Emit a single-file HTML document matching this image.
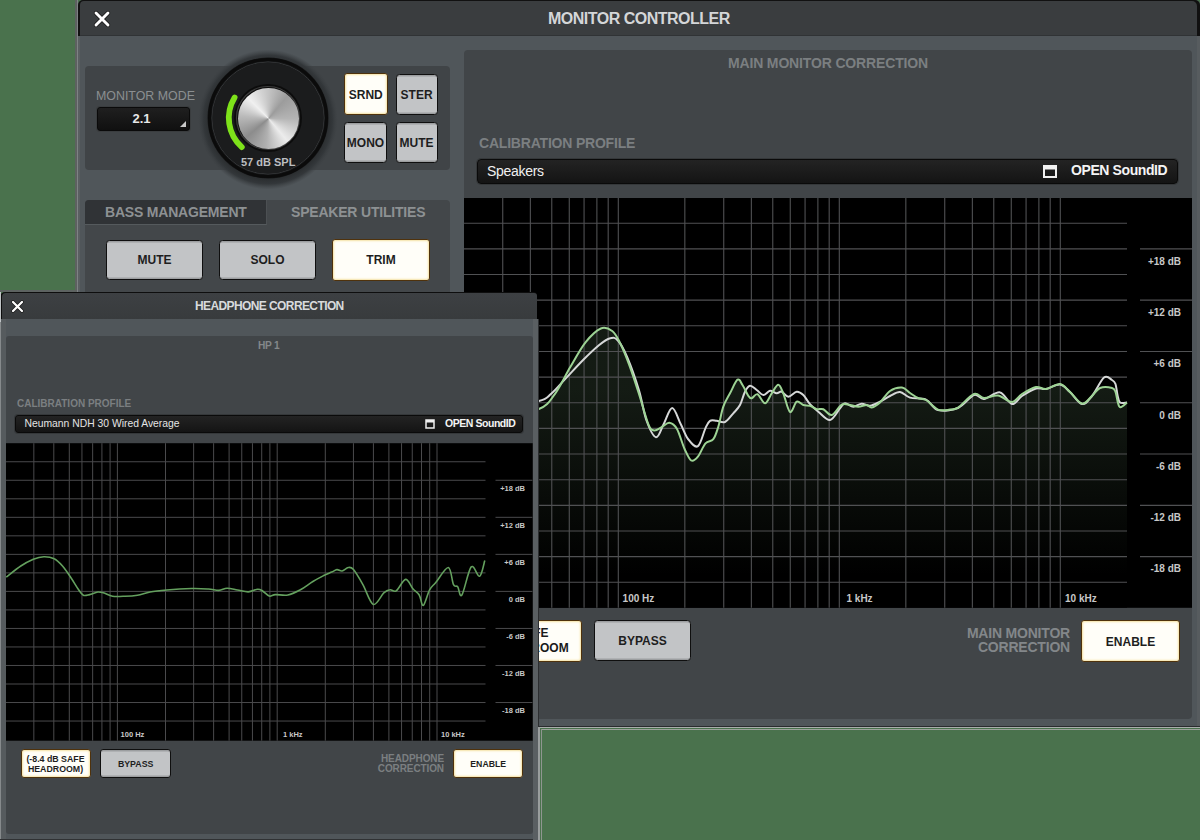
<!DOCTYPE html>
<html><head><meta charset="utf-8"><style>
*{box-sizing:border-box;margin:0;padding:0}
html,body{width:1200px;height:840px;overflow:hidden;background:#4a724d;font-family:"Liberation Sans", sans-serif}
.a{position:absolute}
.t{position:absolute;white-space:nowrap;font-family:"Liberation Sans", sans-serif}
.btn{position:absolute;border:1.8px solid #0f0f0f;border-radius:3.5px;padding-top:1px;background:#c2c4c6;color:#1e1e1e;font-weight:bold;display:flex;align-items:center;justify-content:center;text-align:center;box-shadow:inset 0 1.5px 0 #9c9ea0, inset 0 -1.5px 0 #9c9ea0}
.on{background:#fffef8;border-color:#4f320c;border-width:1.7px;border-radius:3px;box-shadow:inset 0 0 2px 1px #f5e2a4}
</style></head><body>

<div class="a" style="left:75px;top:0;width:3px;height:728px;background:#5d6160"></div>
<div class="a" style="left:77px;top:0;width:1px;height:728px;background:#7e8284"></div>
<div class="a" style="left:78px;top:0;width:1122px;height:728px;background:#50565a;border-top-left-radius:5px;border-top-right-radius:5px;overflow:hidden">
<div class="a" style="left:0;top:0;width:1122px;height:36px;background:#111"></div>
<div class="a" style="left:2px;top:1px;width:1117px;height:35px;background:#3a3d3f;border-top-left-radius:4px;border-top-right-radius:5px"></div>
<div class="a" style="left:0;top:36px;width:2px;height:692px;background:#5a5f62"></div>
<div class="a" style="left:2px;top:35px;width:1117px;height:1px;background:#303335"></div>
<div class="a" style="left:1119px;top:36px;width:3px;height:692px;background:#575c5f"></div>
<div class="a" style="left:0;top:726px;width:1122px;height:2px;background:#2a2c2e"></div>
</div>
<div class="a" style="left:538px;top:727px;width:662px;height:1.2px;background:#a9adab"></div>
<div class="a" style="left:541px;top:729px;width:659px;height:1.2px;background:#9ca29c"></div>
<div class="a" style="left:538.4px;top:727px;width:1.2px;height:113px;background:#9a9e9e"></div>
<div class="a" style="left:541px;top:729px;width:1.2px;height:111px;background:#8f9690"></div>
<svg class="a" style="left:91.8px;top:8.5px" width="20" height="20" viewBox="0 0 20 20"><path d="M4,4 L16,16 M16,4 L4,16" stroke="#151515" stroke-width="4.4" stroke-linecap="round"/><path d="M4,4 L16,16 M16,4 L4,16" stroke="#fff" stroke-width="2.9" stroke-linecap="round"/></svg>
<div class="t" style="left:548px;top:10.2px;font-size:16px;font-weight:bold;color:#d4d6d8;letter-spacing:-0.5px">MONITOR CONTROLLER</div>
<div class="a" style="left:85px;top:66px;width:365px;height:104px;background:#404447;border-radius:4px"></div>
<div class="t" style="left:96px;top:89px;font-size:12.4px;color:#8b8f91">MONITOR MODE</div>
<div class="a" style="left:97px;top:107px;width:93px;height:24px;background:linear-gradient(#1f1f1f,#101010);border:1px solid #0a0a0a;border-radius:3px;box-shadow:0 0 0 1px #3a3d3f"></div>
<div class="t" style="left:97px;top:111.3px;width:89px;text-align:center;font-size:13px;font-weight:bold;color:#e8e8e8">2.1</div>
<svg class="a" style="left:180px;top:121px" width="7" height="7"><path d="M6,0 L6,6 L0,6 Z" fill="#c8c8c8"/></svg>
<svg class="a" style="left:196px;top:46px" width="144" height="144" viewBox="0 0 144 144">
<defs>
<radialGradient id="halo" cx="72" cy="73.5" r="70" gradientUnits="userSpaceOnUse"><stop offset="0.84" stop-color="#2a2d2f"/><stop offset="0.92" stop-color="#33373a"/><stop offset="1" stop-color="#3c4043" stop-opacity="0"/></radialGradient>
</defs>
<circle cx="72" cy="73.5" r="70" fill="url(#halo)"/>
<circle cx="72" cy="72" r="60.5" fill="#161718"/>
<circle cx="72" cy="72" r="58.5" fill="none" stroke="#0b0b0b" stroke-width="3"/>
<circle cx="72" cy="72" r="56" fill="none" stroke="#36383a" stroke-width="1"/>
<circle cx="72" cy="72" r="55.5" fill="#1b1c1d"/>
<circle cx="72" cy="72" r="34" fill="#0c0c0c"/>
<circle cx="72" cy="72" r="31.5" fill="none" stroke="#3c3c3c" stroke-width="1.2"/>
<path d="M38.6,51.5 A39.2,39.2 0 0 0 45.8,101.1" fill="none" stroke="#7ee21a" stroke-width="5.8" stroke-linecap="round"/>
</svg>
<div class="a" style="left:237.5px;top:87.5px;width:61px;height:61px;border-radius:50%;background:conic-gradient(from 0deg,#c4c4c4 0deg,#9c9c9c 40deg,#b4b4b4 90deg,#ececec 140deg,#b0b0b0 185deg,#8c8c8c 230deg,#bababa 275deg,#f0f0f0 315deg,#c4c4c4 360deg)"></div>
<div class="t" style="left:241px;top:156px;font-size:11px;font-weight:bold;color:#bcbec0">57 dB SPL</div>
<div class="btn on" style="left:344px;top:73px;width:43.5px;height:42px;font-size:12px;">SRND</div>
<div class="btn" style="left:395.5px;top:73.5px;width:42.19999999999999px;height:41.0px;font-size:12px;">STER</div>
<div class="btn" style="left:344px;top:122px;width:43px;height:41px;font-size:12px;">MONO</div>
<div class="btn" style="left:395.5px;top:122px;width:42.19999999999999px;height:41px;font-size:12px;">MUTE</div>
<div class="a" style="left:85px;top:199.5px;width:365px;height:120px;background:#43474a;border-radius:4px 4px 0 0"></div>
<div class="a" style="left:85px;top:200px;width:182px;height:25px;background:#303336;border-radius:4px 0 0 0;border-bottom:1px solid #555a5d;border-right:1px solid #4c5053"></div>
<div class="t" style="left:105px;top:204px;font-size:14px;font-weight:bold;color:#8d9193;letter-spacing:-0.2px">BASS MANAGEMENT</div>
<div class="t" style="left:291px;top:204px;font-size:14px;font-weight:bold;color:#8d9193;letter-spacing:-0.2px">SPEAKER UTILITIES</div>
<div class="btn" style="left:106px;top:239.5px;width:97px;height:40.5px;font-size:12px;">MUTE</div>
<div class="btn" style="left:219px;top:239.5px;width:97px;height:40.5px;font-size:12px;">SOLO</div>
<div class="btn on" style="left:332px;top:239px;width:98px;height:41.5px;font-size:12px;">TRIM</div>
<div class="a" style="left:464px;top:50px;width:728px;height:669px;background:#414548;border-radius:4px"></div>
<div class="t" style="left:464px;top:55px;width:728px;text-align:center;font-size:14px;font-weight:bold;color:#7b7f81;letter-spacing:-0.15px">MAIN MONITOR CORRECTION</div>
<div class="t" style="left:479px;top:135px;font-size:14px;font-weight:bold;color:#7b7f81;letter-spacing:-0.2px">CALIBRATION PROFILE</div>
<div class="a" style="left:477px;top:159px;width:701px;height:25px;background:linear-gradient(#232323,#141414);border:1px solid #0a0a0a;border-radius:4px;box-shadow:0 0 0 1px #35383a"></div>
<div class="t" style="left:487px;top:163px;font-size:14px;color:#f0f0f0;letter-spacing:-0.3px">Speakers</div>
<svg class="a" style="left:1043px;top:165px" width="14" height="13"><rect x="1" y="1" width="12" height="11" fill="none" stroke="#f0f0f0" stroke-width="2"/><rect x="1" y="1" width="12" height="3.5" fill="#f0f0f0"/></svg>
<div class="t" style="left:1071px;top:162px;font-size:14px;font-weight:bold;color:#f4f4f4;letter-spacing:-0.4px">OPEN SoundID</div>
<svg class="a" style="left:0;top:0" width="1200" height="840" viewBox="0 0 1200 840">
<defs><linearGradient id="mfill" x1="0" y1="390" x2="0" y2="575" gradientUnits="userSpaceOnUse"><stop offset="0" stop-color="#161e16"/><stop offset="1" stop-color="#000"/></linearGradient></defs>
<rect x="464" y="198" width="728" height="409.79999999999995" fill="#000"/>
<path d="M464.0,420.0 C470.0,419.2 487.5,416.8 500.0,415.0 C512.5,413.2 529.7,412.5 538.9,409.0 C548.1,405.5 549.8,400.8 555.0,393.8 C560.2,386.8 565.2,375.7 570.3,367.1 C575.4,358.5 580.4,348.8 585.5,342.4 C590.6,336.0 596.3,330.4 600.8,328.5 C605.2,326.6 609.0,328.7 612.2,331.0 C615.4,333.3 616.9,336.7 619.8,342.4 C622.6,348.1 626.1,356.6 629.3,365.2 C632.5,373.8 635.7,383.9 638.9,393.8 C642.1,403.7 645.9,418.2 648.4,424.3 C650.9,430.4 651.9,429.9 654.1,430.4 C656.3,430.9 659.2,428.4 661.7,427.1 C664.2,425.8 666.8,422.5 669.3,422.8 C671.8,423.1 674.5,424.6 677.0,429.0 C679.5,433.4 682.2,443.8 684.6,449.0 C687.0,454.2 689.0,459.2 691.2,460.5 C693.4,461.8 695.5,459.6 697.9,456.7 C700.3,453.8 702.9,446.2 705.5,443.3 C708.1,440.4 711.2,442.0 713.3,439.2 C715.4,436.4 716.6,432.1 718.3,426.7 C720.0,421.3 721.3,412.3 723.3,406.7 C725.2,401.1 727.6,397.8 730.0,393.3 C732.4,388.8 735.4,381.1 737.5,379.7 C739.6,378.3 740.7,382.3 742.5,385.0 C744.3,387.7 746.8,393.6 748.3,395.8 C749.8,398.0 750.2,398.6 751.7,398.3 C753.2,398.0 755.3,393.4 757.5,394.2 C759.7,395.0 762.6,403.4 765.0,403.3 C767.4,403.2 769.5,396.4 771.7,393.3 C773.9,390.2 776.4,384.7 778.3,384.7 C780.2,384.7 781.3,388.8 783.3,393.3 C785.2,397.9 787.8,410.6 790.0,412.0 C792.2,413.4 794.5,402.9 796.7,401.7 C798.9,400.5 801.1,404.3 803.3,405.0 C805.5,405.7 807.8,405.1 810.0,405.8 C812.2,406.5 814.5,408.6 816.7,409.2 C818.9,409.8 820.8,408.2 823.3,409.2 C825.8,410.2 828.6,415.8 831.7,415.0 C834.8,414.2 838.7,406.4 841.7,404.7 C844.8,403.0 847.2,404.7 850.0,405.0 C852.8,405.3 855.5,406.7 858.3,406.7 C861.1,406.7 864.5,404.9 866.7,405.0 C868.9,405.1 869.5,407.9 871.7,407.5 C873.9,407.1 877.0,405.2 880.0,402.5 C883.0,399.8 886.3,393.5 890.0,391.0 C893.7,388.5 898.7,387.3 902.0,387.6 C905.3,387.9 907.3,391.3 910.0,393.0 C912.7,394.7 915.3,396.8 918.0,398.0 C920.7,399.2 922.7,398.1 926.0,400.0 C929.3,401.9 934.0,408.0 938.0,409.6 C942.0,411.2 946.7,409.9 950.0,409.6 C953.3,409.3 954.0,410.2 958.0,407.6 C962.0,405.0 969.7,395.6 974.0,394.0 C978.3,392.4 980.0,397.7 984.0,398.0 C988.0,398.3 993.3,394.9 998.0,395.6 C1002.7,396.3 1008.0,402.3 1012.0,402.0 C1016.0,401.7 1018.0,396.5 1022.0,394.0 C1026.0,391.5 1032.0,387.8 1036.0,387.0 C1040.0,386.2 1042.0,389.5 1046.0,389.0 C1050.0,388.5 1056.0,383.5 1060.0,384.0 C1064.0,384.5 1066.3,388.7 1070.0,392.0 C1073.7,395.3 1078.3,402.9 1082.0,403.6 C1085.7,404.3 1089.0,398.6 1092.0,396.0 C1095.0,393.4 1096.7,389.3 1100.0,388.0 C1103.3,386.7 1109.4,387.3 1112.0,388.0 C1114.6,388.7 1114.5,389.5 1115.5,392.0 C1116.5,394.5 1117.2,400.4 1118.0,403.0 C1118.8,405.6 1119.0,407.4 1120.5,407.3 C1122.0,407.2 1125.9,403.3 1127.0,402.5 L1127,607.8 L464,607.8 Z" fill="url(#mfill)" opacity="0.9"/>
<g stroke="#505153" stroke-width="1.1">
<line x1="502.74" y1="198" x2="502.74" y2="607.8" />
<line x1="530.36" y1="198" x2="530.36" y2="607.8" />
<line x1="551.77" y1="198" x2="551.77" y2="607.8" />
<line x1="569.27" y1="198" x2="569.27" y2="607.8" />
<line x1="584.07" y1="198" x2="584.07" y2="607.8" />
<line x1="596.88" y1="198" x2="596.88" y2="607.8" />
<line x1="608.19" y1="198" x2="608.19" y2="607.8" />
<line x1="618.30" y1="198" x2="618.30" y2="607.8" />
<line x1="684.83" y1="198" x2="684.83" y2="607.8" />
<line x1="723.74" y1="198" x2="723.74" y2="607.8" />
<line x1="751.36" y1="198" x2="751.36" y2="607.8" />
<line x1="772.77" y1="198" x2="772.77" y2="607.8" />
<line x1="790.27" y1="198" x2="790.27" y2="607.8" />
<line x1="805.07" y1="198" x2="805.07" y2="607.8" />
<line x1="817.88" y1="198" x2="817.88" y2="607.8" />
<line x1="829.19" y1="198" x2="829.19" y2="607.8" />
<line x1="839.30" y1="198" x2="839.30" y2="607.8" />
<line x1="905.83" y1="198" x2="905.83" y2="607.8" />
<line x1="944.74" y1="198" x2="944.74" y2="607.8" />
<line x1="972.36" y1="198" x2="972.36" y2="607.8" />
<line x1="993.77" y1="198" x2="993.77" y2="607.8" />
<line x1="1011.27" y1="198" x2="1011.27" y2="607.8" />
<line x1="1026.07" y1="198" x2="1026.07" y2="607.8" />
<line x1="1038.88" y1="198" x2="1038.88" y2="607.8" />
<line x1="1050.19" y1="198" x2="1050.19" y2="607.8" />
<line x1="1060.30" y1="198" x2="1060.30" y2="607.8" />
<line x1="464" y1="223.20" x2="1127" y2="223.20" />
<line x1="464" y1="248.85" x2="1127" y2="248.85" />
<line x1="464" y1="274.50" x2="1127" y2="274.50" />
<line x1="464" y1="300.15" x2="1127" y2="300.15" />
<line x1="464" y1="325.80" x2="1127" y2="325.80" />
<line x1="464" y1="351.45" x2="1127" y2="351.45" />
<line x1="464" y1="377.10" x2="1127" y2="377.10" />
<line x1="464" y1="402.75" x2="1127" y2="402.75" />
<line x1="464" y1="428.40" x2="1127" y2="428.40" />
<line x1="464" y1="454.05" x2="1127" y2="454.05" />
<line x1="464" y1="479.70" x2="1127" y2="479.70" />
<line x1="464" y1="505.35" x2="1127" y2="505.35" />
<line x1="464" y1="531.00" x2="1127" y2="531.00" />
<line x1="464" y1="556.65" x2="1127" y2="556.65" />
<line x1="464" y1="582.30" x2="1127" y2="582.30" />
<line x1="1140" y1="248.85" x2="1192" y2="248.85" />
<line x1="1140" y1="300.15" x2="1192" y2="300.15" />
<line x1="1140" y1="351.45" x2="1192" y2="351.45" />
<line x1="1140" y1="402.75" x2="1192" y2="402.75" />
<line x1="1140" y1="454.05" x2="1192" y2="454.05" />
<line x1="1140" y1="505.35" x2="1192" y2="505.35" />
<line x1="1140" y1="556.65" x2="1192" y2="556.65" />
</g>
<path d="M464.0,410.0 C470.0,409.3 487.5,407.5 500.0,406.0 C512.5,404.5 530.4,403.0 538.9,401.0 C547.4,399.0 546.6,397.7 551.2,393.8 C555.8,389.9 561.1,383.3 566.5,377.6 C571.9,371.9 578.2,364.9 583.6,359.5 C589.0,354.1 594.5,348.8 598.9,345.2 C603.3,341.6 607.1,339.0 610.3,338.2 C613.5,337.4 615.0,337.3 617.9,340.5 C620.8,343.7 623.9,349.4 627.4,357.6 C630.9,365.9 635.7,379.5 638.9,390.0 C642.1,400.5 643.6,412.6 646.5,420.5 C649.4,428.4 653.1,436.6 656.0,437.2 C658.9,437.8 660.9,429.1 663.6,424.3 C666.3,419.5 669.3,408.1 672.2,408.1 C675.1,408.1 678.1,419.1 680.8,424.3 C683.5,429.5 685.5,435.9 688.4,439.5 C691.2,443.1 695.0,448.1 697.9,446.2 C700.8,444.3 703.5,432.3 705.5,428.1 C707.5,423.9 708.1,422.0 710.0,420.8 C711.9,419.6 714.2,420.6 716.7,420.8 C719.2,421.0 722.2,423.2 725.0,422.0 C727.8,420.8 730.8,416.1 733.3,413.3 C735.8,410.5 738.0,408.6 740.0,405.0 C742.0,401.4 743.3,394.9 745.0,391.7 C746.7,388.5 748.0,386.1 750.0,385.8 C752.0,385.5 754.5,388.5 756.7,390.0 C758.9,391.5 761.1,394.9 763.3,395.0 C765.5,395.1 767.8,391.1 770.0,390.8 C772.2,390.5 774.8,393.2 776.7,393.3 C778.7,393.4 779.8,391.1 781.7,391.7 C783.6,392.3 785.8,396.7 788.3,396.7 C790.8,396.7 794.2,392.0 796.7,391.7 C799.2,391.4 801.1,392.9 803.3,395.0 C805.5,397.1 807.5,401.4 810.0,404.2 C812.5,407.0 815.0,409.1 818.3,411.7 C821.6,414.3 826.4,420.6 830.0,420.0 C833.6,419.4 837.5,411.1 840.0,408.3 C842.5,405.5 842.8,403.6 845.0,403.3 C847.2,403.0 850.5,406.6 853.3,406.7 C856.1,406.8 858.9,403.8 861.7,403.7 C864.5,403.6 867.0,406.1 870.0,405.8 C873.0,405.5 876.7,403.3 880.0,401.7 C883.3,400.1 886.7,397.6 890.0,396.0 C893.3,394.4 896.7,391.7 900.0,392.0 C903.3,392.3 905.7,396.3 910.0,397.6 C914.3,398.9 921.3,397.5 926.0,399.6 C930.7,401.7 932.7,408.6 938.0,410.0 C943.3,411.4 952.0,410.5 958.0,408.0 C964.0,405.5 969.7,396.5 974.0,395.0 C978.3,393.5 979.7,399.4 984.0,399.0 C988.3,398.6 995.3,391.6 1000.0,392.4 C1004.7,393.2 1008.3,403.4 1012.0,404.0 C1015.7,404.6 1018.0,398.6 1022.0,396.0 C1026.0,393.4 1032.0,389.7 1036.0,388.5 C1040.0,387.3 1042.0,389.7 1046.0,389.0 C1050.0,388.3 1056.0,384.0 1060.0,384.5 C1064.0,385.0 1066.3,388.8 1070.0,392.0 C1073.7,395.2 1078.3,403.3 1082.0,404.0 C1085.7,404.7 1088.3,400.4 1092.0,396.0 C1095.7,391.6 1100.7,380.3 1104.0,377.6 C1107.3,374.9 1110.1,378.9 1112.0,380.0 C1113.9,381.1 1114.6,381.5 1115.5,384.0 C1116.4,386.5 1116.8,391.9 1117.5,395.0 C1118.2,398.1 1118.4,401.2 1120.0,402.5 C1121.6,403.8 1125.8,402.5 1127.0,402.5" fill="none" stroke="#d6d8d8" stroke-width="2"/>
<path d="M464.0,420.0 C470.0,419.2 487.5,416.8 500.0,415.0 C512.5,413.2 529.7,412.5 538.9,409.0 C548.1,405.5 549.8,400.8 555.0,393.8 C560.2,386.8 565.2,375.7 570.3,367.1 C575.4,358.5 580.4,348.8 585.5,342.4 C590.6,336.0 596.3,330.4 600.8,328.5 C605.2,326.6 609.0,328.7 612.2,331.0 C615.4,333.3 616.9,336.7 619.8,342.4 C622.6,348.1 626.1,356.6 629.3,365.2 C632.5,373.8 635.7,383.9 638.9,393.8 C642.1,403.7 645.9,418.2 648.4,424.3 C650.9,430.4 651.9,429.9 654.1,430.4 C656.3,430.9 659.2,428.4 661.7,427.1 C664.2,425.8 666.8,422.5 669.3,422.8 C671.8,423.1 674.5,424.6 677.0,429.0 C679.5,433.4 682.2,443.8 684.6,449.0 C687.0,454.2 689.0,459.2 691.2,460.5 C693.4,461.8 695.5,459.6 697.9,456.7 C700.3,453.8 702.9,446.2 705.5,443.3 C708.1,440.4 711.2,442.0 713.3,439.2 C715.4,436.4 716.6,432.1 718.3,426.7 C720.0,421.3 721.3,412.3 723.3,406.7 C725.2,401.1 727.6,397.8 730.0,393.3 C732.4,388.8 735.4,381.1 737.5,379.7 C739.6,378.3 740.7,382.3 742.5,385.0 C744.3,387.7 746.8,393.6 748.3,395.8 C749.8,398.0 750.2,398.6 751.7,398.3 C753.2,398.0 755.3,393.4 757.5,394.2 C759.7,395.0 762.6,403.4 765.0,403.3 C767.4,403.2 769.5,396.4 771.7,393.3 C773.9,390.2 776.4,384.7 778.3,384.7 C780.2,384.7 781.3,388.8 783.3,393.3 C785.2,397.9 787.8,410.6 790.0,412.0 C792.2,413.4 794.5,402.9 796.7,401.7 C798.9,400.5 801.1,404.3 803.3,405.0 C805.5,405.7 807.8,405.1 810.0,405.8 C812.2,406.5 814.5,408.6 816.7,409.2 C818.9,409.8 820.8,408.2 823.3,409.2 C825.8,410.2 828.6,415.8 831.7,415.0 C834.8,414.2 838.7,406.4 841.7,404.7 C844.8,403.0 847.2,404.7 850.0,405.0 C852.8,405.3 855.5,406.7 858.3,406.7 C861.1,406.7 864.5,404.9 866.7,405.0 C868.9,405.1 869.5,407.9 871.7,407.5 C873.9,407.1 877.0,405.2 880.0,402.5 C883.0,399.8 886.3,393.5 890.0,391.0 C893.7,388.5 898.7,387.3 902.0,387.6 C905.3,387.9 907.3,391.3 910.0,393.0 C912.7,394.7 915.3,396.8 918.0,398.0 C920.7,399.2 922.7,398.1 926.0,400.0 C929.3,401.9 934.0,408.0 938.0,409.6 C942.0,411.2 946.7,409.9 950.0,409.6 C953.3,409.3 954.0,410.2 958.0,407.6 C962.0,405.0 969.7,395.6 974.0,394.0 C978.3,392.4 980.0,397.7 984.0,398.0 C988.0,398.3 993.3,394.9 998.0,395.6 C1002.7,396.3 1008.0,402.3 1012.0,402.0 C1016.0,401.7 1018.0,396.5 1022.0,394.0 C1026.0,391.5 1032.0,387.8 1036.0,387.0 C1040.0,386.2 1042.0,389.5 1046.0,389.0 C1050.0,388.5 1056.0,383.5 1060.0,384.0 C1064.0,384.5 1066.3,388.7 1070.0,392.0 C1073.7,395.3 1078.3,402.9 1082.0,403.6 C1085.7,404.3 1089.0,398.6 1092.0,396.0 C1095.0,393.4 1096.7,389.3 1100.0,388.0 C1103.3,386.7 1109.4,387.3 1112.0,388.0 C1114.6,388.7 1114.5,389.5 1115.5,392.0 C1116.5,394.5 1117.2,400.4 1118.0,403.0 C1118.8,405.6 1119.0,407.4 1120.5,407.3 C1122.0,407.2 1125.9,403.3 1127.0,402.5" fill="none" stroke="#9dd394" stroke-width="2"/>
</svg>
<div class="t" style="left:1100px;width:81px;text-align:right;top:255.7px;font-size:10px;font-weight:bold;color:#c8c8c8">+18 dB</div>
<div class="t" style="left:1100px;width:81px;text-align:right;top:306.9px;font-size:10px;font-weight:bold;color:#c8c8c8">+12 dB</div>
<div class="t" style="left:1100px;width:81px;text-align:right;top:358.2px;font-size:10px;font-weight:bold;color:#c8c8c8">+6 dB</div>
<div class="t" style="left:1100px;width:81px;text-align:right;top:409.6px;font-size:10px;font-weight:bold;color:#c8c8c8">0 dB</div>
<div class="t" style="left:1100px;width:81px;text-align:right;top:460.9px;font-size:10px;font-weight:bold;color:#c8c8c8">-6 dB</div>
<div class="t" style="left:1100px;width:81px;text-align:right;top:512.1px;font-size:10px;font-weight:bold;color:#c8c8c8">-12 dB</div>
<div class="t" style="left:1100px;width:81px;text-align:right;top:563.4px;font-size:10px;font-weight:bold;color:#c8c8c8">-18 dB</div>
<div class="t" style="left:622.6px;top:592.5px;font-size:10px;font-weight:bold;color:#c8c8c8">100 Hz</div>
<div class="t" style="left:846.5px;top:592.5px;font-size:10px;font-weight:bold;color:#c8c8c8">1 kHz</div>
<div class="t" style="left:1065px;top:592.5px;font-size:10px;font-weight:bold;color:#c8c8c8">10 kHz</div>
<div class="btn on" style="left:480px;top:620px;width:101.5px;height:41.5px;font-size:12px;"></div>
<div class="t" style="left:448px;width:100.5px;text-align:right;top:626px;font-size:12px;font-weight:bold;color:#1a1a1a">(-8.4 dB SAFE</div>
<div class="t" style="left:468px;width:100.7px;text-align:right;top:640.5px;font-size:12px;font-weight:bold;color:#1a1a1a">HEADROOM</div>
<div class="btn" style="left:594px;top:620px;width:97px;height:41px;font-size:12px;">BYPASS</div>
<div class="t" style="left:900px;width:170px;text-align:right;top:626px;font-size:14px;font-weight:bold;color:#83878a;line-height:14px;letter-spacing:-0.2px">MAIN MONITOR<br>CORRECTION</div>
<div class="btn on" style="left:1081px;top:620px;width:99px;height:42px;font-size:12px;">ENABLE</div>
<div class="a" style="left:0;top:290px;width:75px;height:2px;background:#5d6361"></div>
<div class="a" style="left:0;top:291.5px;width:537px;height:28px;background:#0e0e0e;border-top-left-radius:5px;border-top-right-radius:4px"></div>
<div class="a" style="left:1.5px;top:292.5px;width:535px;height:26.5px;background:linear-gradient(#3d4043,#383b3d);border-top-left-radius:4px;border-top-right-radius:3px"></div>
<div class="a" style="left:0;top:319px;width:538px;height:521px;background:#50565a"></div>
<div class="a" style="left:0;top:319px;width:1px;height:521px;background:#868a8c"></div>
<div class="a" style="left:1px;top:319px;width:5px;height:521px;background:#565b5e"></div>
<div class="a" style="left:0;top:839px;width:538px;height:1px;background:#303234"></div>
<div class="a" style="left:533px;top:319px;width:5px;height:521px;background:#5a5f62"></div>
<div class="a" style="left:537.5px;top:319px;width:1px;height:408px;background:#2c2e30"></div>
<div class="a" style="left:0;top:292px;width:1px;height:30px;background:#c0c4c6"></div>
<svg class="a" style="left:10px;top:299px" width="15" height="15" viewBox="0 0 15 15"><path d="M3,3 L12,12 M12,3 L3,12" stroke="#151515" stroke-width="3.6" stroke-linecap="round"/><path d="M3,3 L12,12 M12,3 L3,12" stroke="#fff" stroke-width="2.3" stroke-linecap="round"/></svg>
<div class="t" style="left:195px;top:299px;font-size:12px;font-weight:bold;color:#d8dadc;letter-spacing:-0.6px">HEADPHONE CORRECTION</div>
<div class="a" style="left:6px;top:336px;width:527px;height:498px;background:#414548;border-radius:3px"></div>
<div class="t" style="left:258px;top:340px;font-size:10.2px;font-weight:bold;color:#84888a;letter-spacing:-0.3px">HP 1</div>
<div class="t" style="left:17px;top:398px;font-size:10px;font-weight:bold;color:#7b7f81">CALIBRATION PROFILE</div>
<div class="a" style="left:15px;top:415px;width:508px;height:18px;background:linear-gradient(#232323,#141414);border:1px solid #0a0a0a;border-radius:3px;box-shadow:0 0 0 1px #35383a"></div>
<div class="t" style="left:24.5px;top:418px;font-size:10.35px;color:#e4e4e4">Neumann NDH 30 Wired Average</div>
<svg class="a" style="left:425px;top:419px" width="10" height="10"><rect x="1" y="1" width="8" height="8" fill="none" stroke="#f0f0f0" stroke-width="1.5"/><rect x="1" y="1" width="8" height="2.5" fill="#f0f0f0"/></svg>
<div class="t" style="left:445px;top:417px;font-size:10.5px;font-weight:bold;color:#f4f4f4;letter-spacing:-0.45px">OPEN SoundID</div>
<svg class="a" style="left:0;top:0" width="1200" height="840" viewBox="0 0 1200 840">
<rect x="6" y="443.2" width="526.7" height="297.50000000000006" fill="#000"/>
<g stroke="#4a4a4c" stroke-width="1">
<line x1="33.84" y1="443.2" x2="33.84" y2="740.7" />
<line x1="53.81" y1="443.2" x2="53.81" y2="740.7" />
<line x1="69.30" y1="443.2" x2="69.30" y2="740.7" />
<line x1="81.95" y1="443.2" x2="81.95" y2="740.7" />
<line x1="92.65" y1="443.2" x2="92.65" y2="740.7" />
<line x1="101.91" y1="443.2" x2="101.91" y2="740.7" />
<line x1="110.09" y1="443.2" x2="110.09" y2="740.7" />
<line x1="117.40" y1="443.2" x2="117.40" y2="740.7" />
<line x1="165.50" y1="443.2" x2="165.50" y2="740.7" />
<line x1="193.64" y1="443.2" x2="193.64" y2="740.7" />
<line x1="213.61" y1="443.2" x2="213.61" y2="740.7" />
<line x1="229.10" y1="443.2" x2="229.10" y2="740.7" />
<line x1="241.75" y1="443.2" x2="241.75" y2="740.7" />
<line x1="252.45" y1="443.2" x2="252.45" y2="740.7" />
<line x1="261.71" y1="443.2" x2="261.71" y2="740.7" />
<line x1="269.89" y1="443.2" x2="269.89" y2="740.7" />
<line x1="277.20" y1="443.2" x2="277.20" y2="740.7" />
<line x1="325.30" y1="443.2" x2="325.30" y2="740.7" />
<line x1="353.44" y1="443.2" x2="353.44" y2="740.7" />
<line x1="373.41" y1="443.2" x2="373.41" y2="740.7" />
<line x1="388.90" y1="443.2" x2="388.90" y2="740.7" />
<line x1="401.55" y1="443.2" x2="401.55" y2="740.7" />
<line x1="412.25" y1="443.2" x2="412.25" y2="740.7" />
<line x1="421.51" y1="443.2" x2="421.51" y2="740.7" />
<line x1="429.69" y1="443.2" x2="429.69" y2="740.7" />
<line x1="437.00" y1="443.2" x2="437.00" y2="740.7" />
<line x1="6" y1="461.76" x2="485.5" y2="461.76" />
<line x1="6" y1="480.28" x2="485.5" y2="480.28" />
<line x1="6" y1="498.80" x2="485.5" y2="498.80" />
<line x1="6" y1="517.32" x2="485.5" y2="517.32" />
<line x1="6" y1="535.84" x2="485.5" y2="535.84" />
<line x1="6" y1="554.36" x2="485.5" y2="554.36" />
<line x1="6" y1="572.88" x2="485.5" y2="572.88" />
<line x1="6" y1="591.40" x2="485.5" y2="591.40" />
<line x1="6" y1="609.92" x2="485.5" y2="609.92" />
<line x1="6" y1="628.44" x2="485.5" y2="628.44" />
<line x1="6" y1="646.96" x2="485.5" y2="646.96" />
<line x1="6" y1="665.48" x2="485.5" y2="665.48" />
<line x1="6" y1="684.00" x2="485.5" y2="684.00" />
<line x1="6" y1="702.52" x2="485.5" y2="702.52" />
<line x1="6" y1="721.04" x2="485.5" y2="721.04" />
<line x1="495.5" y1="480.28" x2="532.4" y2="480.28" />
<line x1="495.5" y1="517.32" x2="532.4" y2="517.32" />
<line x1="495.5" y1="554.36" x2="532.4" y2="554.36" />
<line x1="495.5" y1="591.40" x2="532.4" y2="591.40" />
<line x1="495.5" y1="628.44" x2="532.4" y2="628.44" />
<line x1="495.5" y1="665.48" x2="532.4" y2="665.48" />
<line x1="495.5" y1="702.52" x2="532.4" y2="702.52" />
</g>
<path d="M6.2,577.1 C8.7,575.2 16.3,569.0 20.8,566.0 C25.3,563.0 29.5,560.8 33.3,559.2 C37.1,557.7 40.3,556.8 43.8,556.7 C47.2,556.6 51.1,557.2 54.2,558.8 C57.3,560.3 59.7,562.9 62.5,566.0 C65.3,569.1 68.2,573.7 70.8,577.5 C73.4,581.3 76.0,586.0 78.1,589.0 C80.2,592.0 81.4,594.3 83.3,595.2 C85.2,596.1 87.2,595.1 89.6,594.6 C92.0,594.1 95.5,592.2 97.9,592.0 C100.3,591.8 101.8,592.4 104.2,593.1 C106.6,593.8 109.0,595.7 112.5,596.2 C116.0,596.8 120.8,596.4 125.0,596.2 C129.2,596.1 133.3,595.9 137.5,595.2 C141.7,594.5 145.1,592.9 150.0,592.0 C154.9,591.1 159.8,590.6 166.7,590.0 C173.6,589.4 184.8,588.7 191.7,588.5 C198.6,588.3 203.8,588.7 208.3,589.0 C212.8,589.3 215.6,590.5 218.8,590.4 C221.9,590.3 223.9,588.4 227.0,588.3 C230.1,588.2 233.9,589.4 237.5,590.0 C241.1,590.6 244.9,592.0 248.3,591.9 C251.7,591.8 255.3,589.3 257.7,589.2 C260.1,589.1 261.0,590.1 262.9,591.2 C264.8,592.4 267.1,595.4 269.2,596.0 C271.3,596.6 272.3,594.8 275.4,594.6 C278.5,594.4 283.7,595.8 287.9,595.0 C292.1,594.2 296.2,592.0 300.4,589.8 C304.6,587.5 309.1,583.8 312.9,581.5 C316.7,579.2 320.2,577.4 323.3,575.8 C326.4,574.2 329.4,573.1 331.7,572.1 C334.0,571.1 335.2,569.8 336.9,569.6 C338.6,569.4 340.2,571.4 342.1,571.0 C344.0,570.6 346.4,567.7 348.3,567.5 C350.2,567.3 351.1,566.8 353.5,569.6 C355.9,572.5 359.6,578.8 362.9,584.6 C366.2,590.4 369.8,603.0 373.3,604.4 C376.8,605.8 381.0,595.3 383.8,592.9 C386.5,590.5 387.9,590.1 390.0,589.8 C392.1,589.4 393.6,592.5 396.2,590.8 C398.9,589.1 402.8,579.7 405.6,579.4 C408.4,579.1 410.6,586.1 412.9,588.8 C415.2,591.4 417.5,592.2 419.2,595.0 C420.9,597.8 421.6,606.3 423.3,605.4 C425.0,604.5 427.5,593.6 429.6,589.8 C431.7,586.0 432.7,586.2 435.8,582.5 C438.9,578.8 445.4,567.1 448.3,567.5 C451.2,567.9 451.9,581.4 453.5,584.6 C455.1,587.8 456.3,585.0 457.7,586.7 C459.1,588.4 459.6,598.3 461.9,595.0 C464.2,591.7 468.3,570.0 471.2,566.9 C474.2,563.8 477.3,577.3 479.6,576.2 C481.9,575.2 483.9,563.2 484.8,560.6" fill="none" stroke="#64a05e" stroke-width="1.6"/>
</svg>
<div class="t" style="left:460px;width:65px;text-align:right;top:483.9px;font-size:7.5px;font-weight:bold;color:#c8c8c8">+18 dB</div>
<div class="t" style="left:460px;width:65px;text-align:right;top:520.9px;font-size:7.5px;font-weight:bold;color:#c8c8c8">+12 dB</div>
<div class="t" style="left:460px;width:65px;text-align:right;top:558.0px;font-size:7.5px;font-weight:bold;color:#c8c8c8">+6 dB</div>
<div class="t" style="left:460px;width:65px;text-align:right;top:595.0px;font-size:7.5px;font-weight:bold;color:#c8c8c8">0 dB</div>
<div class="t" style="left:460px;width:65px;text-align:right;top:632.0px;font-size:7.5px;font-weight:bold;color:#c8c8c8">-6 dB</div>
<div class="t" style="left:460px;width:65px;text-align:right;top:669.1px;font-size:7.5px;font-weight:bold;color:#c8c8c8">-12 dB</div>
<div class="t" style="left:460px;width:65px;text-align:right;top:706.1px;font-size:7.5px;font-weight:bold;color:#c8c8c8">-18 dB</div>
<div class="t" style="left:120.6px;top:729.5px;font-size:7.5px;font-weight:bold;color:#c8c8c8">100 Hz</div>
<div class="t" style="left:283px;top:729.5px;font-size:7.5px;font-weight:bold;color:#c8c8c8">1 kHz</div>
<div class="t" style="left:441px;top:729.5px;font-size:7.5px;font-weight:bold;color:#c8c8c8">10 kHz</div>
<div class="btn on" style="left:20.5px;top:748.8px;width:70.0px;height:29.700000000000045px;font-size:8.8px;line-height:10px;border-width:1.5px;border-radius:3px;padding-top:1px">(-8.4 dB SAFE<br>HEADROOM)</div>
<div class="btn" style="left:100.3px;top:748.8px;width:70.7px;height:29.700000000000045px;font-size:8.8px;border-width:1.5px;border-radius:3px">BYPASS</div>
<div class="t" style="left:300px;width:144px;text-align:right;top:753.5px;font-size:10px;font-weight:bold;color:#7b7f81;line-height:10px;letter-spacing:-0.1px">HEADPHONE<br>CORRECTION</div>
<div class="btn on" style="left:453px;top:749.3px;width:70.39999999999998px;height:29.200000000000045px;font-size:8.7px;border-width:1.5px;border-radius:3px">ENABLE</div>
</body></html>
